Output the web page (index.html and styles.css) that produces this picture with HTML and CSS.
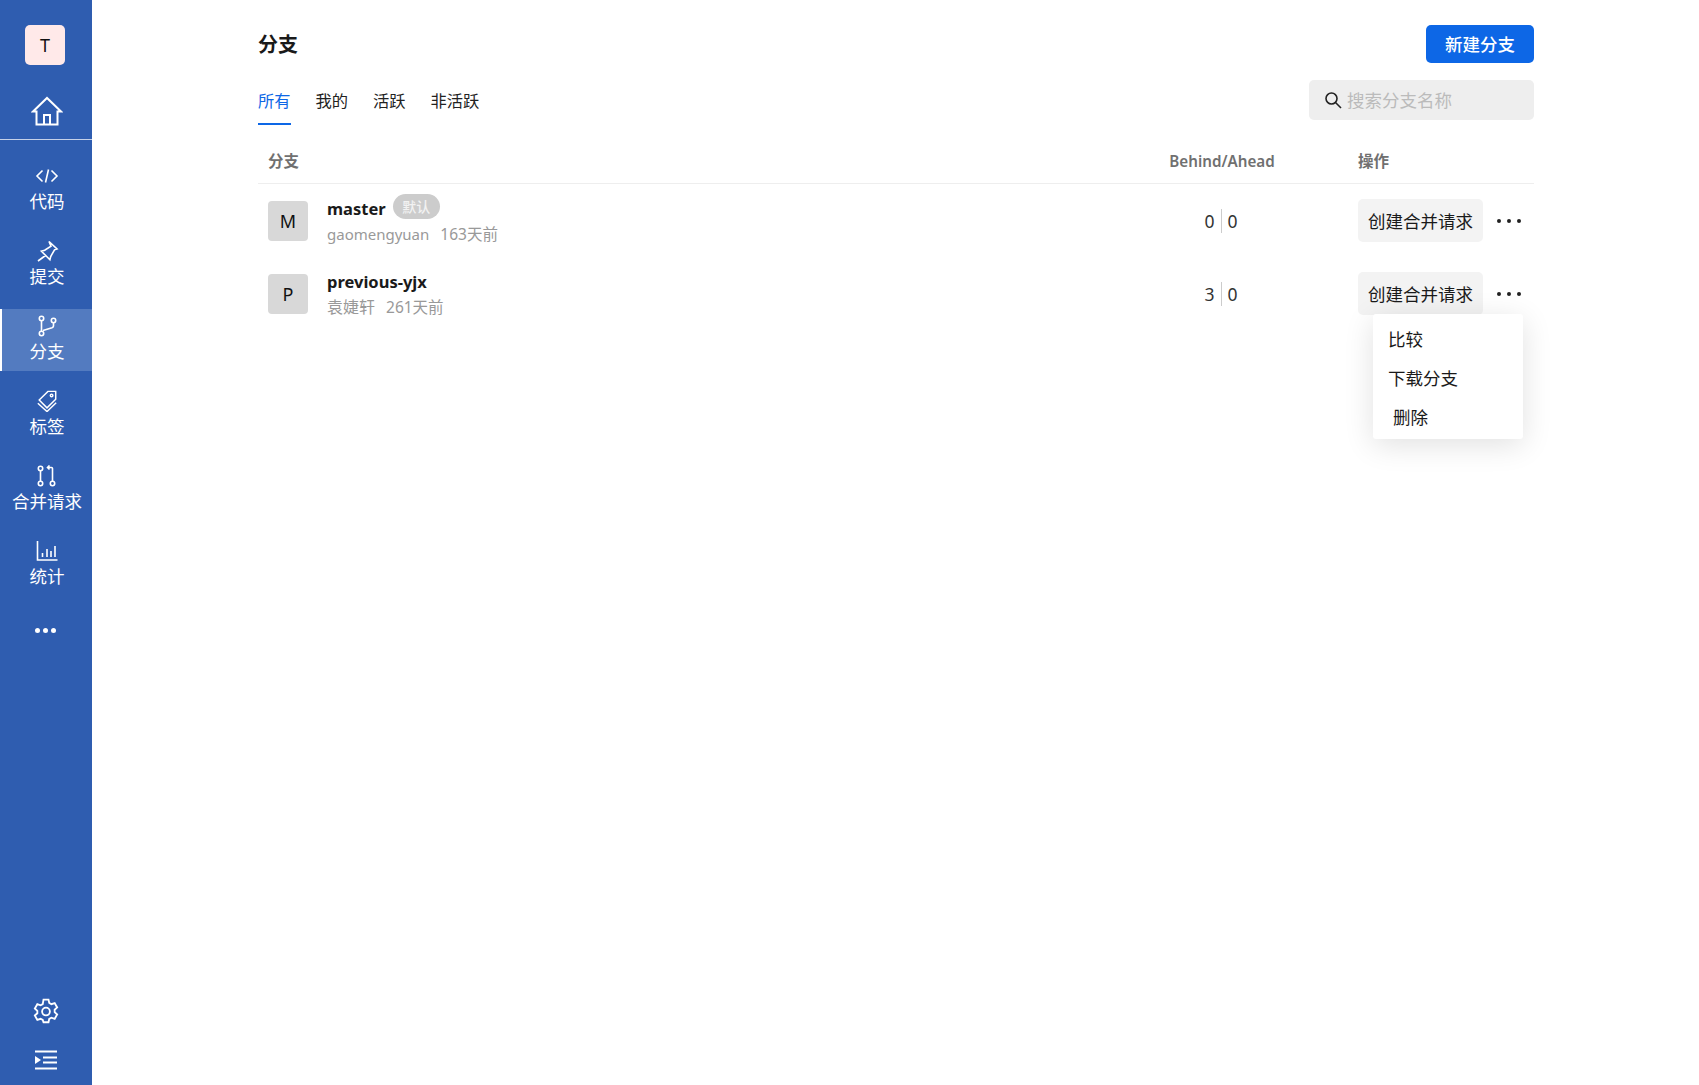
FILE: index.html
```html
<!DOCTYPE html>
<html>
<head>
    <title>分支</title>
    <link rel="stylesheet" href="styles.css">
</head>
<body>
    <div class="app">
        <div class="sidebar">
            <div class="avatar">T</div>
            <div class="home">
                <svg class="home-icon" viewBox="0 0 32 30"><path d="M2 15.500 16 2l14 13.500h-3.500V28.500H5.500V15.500Z M13 28.500V19h6v9.500"/></svg>
            </div>
            <div class="nav">
                <div class="nav-item">
                    <svg class="nav-icon" viewBox="0 0 24 20"><path d="M7.500 4.500 2 10l5.500 5.500M16.500 4.500 22 10l-5.500 5.500M13.500 3.500l-3 13"/></svg>
                    <span>代码</span>
                </div>
                <div class="nav-item">
                    <svg class="nav-icon" viewBox="0 0 24 22"><path d="M14 1.500 22 9l-2.500.8-3.800 6.700-.8 3.200-8.500-8.500 3.300-.9 6.300-4ZM10.500 15.500 3 21"/></svg>
                    <span>提交</span>
                </div>
                <div class="nav-item active">
                    <svg class="nav-icon" viewBox="0 0 24 22"><circle cx="6.500" cy="3.500" r="2.200"/><circle cx="6.500" cy="18.500" r="2.200"/><circle cx="18.500" cy="5.500" r="2.200"/><path d="M6.500 5.700v10.600M18.500 7.700v3.300c0 1-.6 1.500-1.500 1.800L8 15.500"/></svg>
                    <span>分支</span>
                </div>
                <div class="nav-item">
                    <svg class="nav-icon" viewBox="0 0 24 24"><path d="M13 1.500h8.500V10L12 19.500 3.500 11ZM2 14.500l10 9 10-9.500"/><circle cx="17" cy="6" r="1.400"/></svg>
                    <span>标签</span>
                </div>
                <div class="nav-item">
                    <svg class="nav-icon" viewBox="0 0 24 22"><circle cx="5.500" cy="3.500" r="2.200"/><circle cx="5.500" cy="18.500" r="2.200"/><circle cx="17.500" cy="18.500" r="2.200"/><path d="M5.500 5.700v10.600M17.500 16.300V3.500a1 1 0 0 0-1-1h-3M14.500.5l-2 2 2 2"/></svg>
                    <span>合并请求</span>
                </div>
                <div class="nav-item">
                    <svg class="nav-icon" viewBox="0 0 24 22"><path d="M2.500 1v19h20M7.500 13v4M12 9v8M16 11v6M20 6v11"/></svg>
                    <span>统计</span>
                </div>
            </div>
            <div class="nav-more"><i></i><i></i><i></i></div>
            <div class="side-bottom">
                <svg class="gear-icon" viewBox="0 0 24 24"><path d="M9.700 1.500h4.600l.7 3.100 2 1.100 3-1 2.300 4-2.300 2.100v2.300l2.300 2.100-2.300 4-3-1-2 1.100-.7 3.100H9.700L9 20.300l-2-1.100-3 1-2.300-4L4 14.100v-2.300L1.700 9.700l2.300-4 3 1 2-1.100Z"/><circle cx="12" cy="12.500" r="3.600"/></svg>
                <svg class="fold-icon" viewBox="0 0 24 20"><path class="line" d="M1 1.500h22M9 7.500h14M9 12.500h14M1 18.500h22"/><path class="solid" d="M1 6l6 4-6 4Z"/></svg>
            </div>
        </div>

        <div class="main">
            <div class="page-head">
                <h1>分支</h1>
                <div class="btn-new"><span>新建分支</span></div>
            </div>
            <div class="toolbar">
                <div class="tabs">
                    <div class="tab active">所有</div>
                    <div class="tab">我的</div>
                    <div class="tab">活跃</div>
                    <div class="tab">非活跃</div>
                </div>
                <div class="search">
                    <svg class="search-icon" viewBox="0 0 18 18"><circle cx="7.500" cy="7.500" r="5.500"/><path d="M11.500 11.500 17 17"/></svg>
                    <span>搜索分支名称</span>
                </div>
            </div>
            <div class="list-head">
                <div class="col-name">分支</div>
                <div class="col-diff">Behind/Ahead</div>
                <div class="col-op">操作</div>
            </div>

            <div class="row">
                <div class="col-name">
                    <div class="letter">M</div>
                    <div class="info">
                        <div class="title"><b>master</b><span class="badge">默认</span></div>
                        <div class="meta"><span class="author-en">gaomengyuan</span><span>163天前</span></div>
                    </div>
                </div>
                <div class="col-diff">
                    <span class="behind">0</span><span class="ahead">0</span>
                </div>
                <div class="col-op">
                    <div class="btn-merge">创建合并请求</div>
                    <div class="dots"><i></i><i></i><i></i></div>
                </div>
            </div>

            <div class="row">
                <div class="col-name">
                    <div class="letter">P</div>
                    <div class="info">
                        <div class="title"><b>previous-yjx</b></div>
                        <div class="meta"><span class="author-cn">袁婕轩</span><span>261天前</span></div>
                    </div>
                </div>
                <div class="col-diff">
                    <span class="behind">3</span><span class="ahead">0</span>
                </div>
                <div class="col-op">
                    <div class="btn-merge">创建合并请求</div>
                    <div class="dots"><i></i><i></i><i></i></div>
                    <div class="menu">
                        <div class="menu-item">比较</div>
                        <div class="menu-item">下载分支</div>
                        <div class="menu-item indent">删除</div>
                    </div>
                </div>
            </div>
        </div>
    </div>
</body>
</html>
```

FILE: styles.css
```css
* {
    box-sizing: border-box;
}

body {
    margin: 0;
    background-color: #fff;
    color: #1a1a1a;
    font-family: "Noto Sans", "Noto Sans CJK SC", sans-serif;
}

.app {
    display: flex;
    height: 100vh;
    overflow: hidden;
}

.sidebar {
    width: 92px;
    flex-shrink: 0;
    display: flex;
    flex-direction: column;
    align-items: center;
    background-color: #2f5db0;
    color: #fff;
    padding-top: 25px;
}

.avatar {
    width: 40px;
    height: 40px;
    margin-right: 2px;
    display: flex;
    justify-content: center;
    align-items: center;
    background-color: #ffe9e9;
    border-radius: 5px;
    color: #111;
    font-size: 18px;
}

.home {
    width: 100%;
    height: 75px;
    padding: 31px 0 0 2px;
    display: flex;
    justify-content: center;
    border-bottom: 1px solid #c5d1e8;
}

.home-icon {
    width: 32px;
    height: 30px;
    fill: none;
    stroke: #fff;
    stroke-width: 2;
}

.nav {
    width: 100%;
    margin-top: 19px;
    display: flex;
    flex-direction: column;
    gap: 13px;
}

.nav-item {
    height: 62px;
    padding-bottom: 3px;
    display: flex;
    flex-direction: column;
    align-items: center;
    justify-content: center;
    border-left: 2px solid transparent;
    font-size: 17.500px;
    line-height: 24px;
}

.nav-item.active {
    background-color: #537bc0;
    border-left-color: #fff;
}

.nav-icon {
    width: 24px;
    height: 22px;
    margin-bottom: 2px;
    fill: none;
    stroke: #fff;
    stroke-width: 1.600;
}

.nav-more {
    margin-top: 32px;
    display: flex;
    gap: 3px;
    padding-right: 2px;
}

.nav-more i {
    width: 5px;
    height: 5px;
    border-radius: 50%;
    background-color: #fff;
}

.side-bottom {
    margin-top: auto;
    padding-bottom: 15px;
    display: flex;
    flex-direction: column;
    align-items: center;
    gap: 26px;
}

.gear-icon {
    width: 26px;
    height: 26px;
    fill: none;
    stroke: #fff;
    stroke-width: 1.700;
}

.fold-icon {
    width: 24px;
    height: 20px;
}

.fold-icon .line {
    fill: none;
    stroke: #fff;
    stroke-width: 1.800;
}

.fold-icon .solid {
    fill: #fff;
}

.main {
    flex: 1;
    padding: 25px 165px 0 166px;
}

.page-head {
    display: flex;
    justify-content: space-between;
    align-items: center;
    height: 38px;
}

h1 {
    margin: -2px 0 0;
    font-size: 20px;
    font-weight: 700;
}

.btn-new {
    width: 108px;
    height: 38px;
    display: flex;
    justify-content: center;
    align-items: center;
    padding-bottom: 2px;
    background-color: #0d67e6;
    border-radius: 5px;
    color: #fff;
    font-size: 17.500px;
    font-weight: 500;
}

.toolbar {
    margin-top: 17px;
    display: flex;
    justify-content: space-between;
    align-items: flex-start;
}

.tabs {
    display: flex;
    gap: 25px;
}

.tab {
    height: 45px;
    padding-top: 9px;
    font-size: 16.250px;
    line-height: 24px;
    color: #222;
}

.tab.active {
    color: #0d67e6;
    border-bottom: 2px solid #0d67e6;
}

.search {
    width: 225px;
    height: 40px;
    display: flex;
    align-items: center;
    gap: 5px;
    padding-left: 15px;
    background-color: #eee;
    border-radius: 5px;
    color: #bbb;
    font-size: 17.500px;
}

.search span {
    margin-top: -2px;
}

.search-icon {
    width: 18px;
    height: 18px;
    fill: none;
    stroke: #222;
    stroke-width: 1.600;
}

.list-head {
    margin-top: 13px;
    height: 46px;
    display: flex;
    align-items: center;
    border-bottom: 1px solid #eee;
    font-size: 15.500px;
    font-weight: 700;
    color: #707070;
}

.list-head .col-name {
    padding-left: 10px;
}

.list-head .col-diff {
    font-size: 15.200px;
    font-weight: 600;
}

.list-head .col-op {
    margin-left: -1px;
}

.col-name {
    flex: 1;
    display: flex;
    align-items: center;
}

.col-diff {
    width: 204px;
    display: flex;
    justify-content: center;
    padding-right: 70px;
}

.col-op {
    width: 176px;
    display: flex;
    align-items: center;
    position: relative;
}

.row {
    height: 73px;
    display: flex;
    align-items: center;
}

.row .col-name {
    padding-left: 10px;
}

.letter {
    width: 40px;
    height: 40px;
    display: flex;
    justify-content: center;
    align-items: center;
    background-color: #d8d8d8;
    border-radius: 4px;
    color: #111;
    font-size: 18px;
}

.info {
    margin-left: 19px;
}

.title {
    display: flex;
    align-items: center;
    height: 26px;
    font-size: 16.500px;
}

.badge {
    margin-left: 7px;
    margin-top: -4px;
    width: 47px;
    height: 25px;
    display: flex;
    justify-content: center;
    align-items: center;
    background-color: #ccc;
    border-radius: 13px;
    color: #f2f2f2;
    font-size: 14px;
    font-weight: 500;
}

.meta {
    margin-top: 1px;
    display: flex;
    gap: 11px;
    font-size: 15.500px;
    line-height: 24px;
    color: #999;
}

.author-en {
    font-size: 15px;
}

.author-cn {
    font-size: 16px;
}

.behind,
.ahead {
    font-size: 17.500px;
    line-height: 24px;
    color: #333;
}

.behind {
    padding-right: 6px;
    border-right: 1px solid #ccc;
}

.ahead {
    padding-left: 6px;
}

.btn-merge {
    width: 125px;
    height: 43px;
    display: flex;
    justify-content: center;
    align-items: center;
    background-color: #f3f3f3;
    border-radius: 5px;
    font-size: 17.500px;
}

.dots {
    margin-left: 14px;
    display: flex;
    gap: 6px;
}

.dots i {
    width: 4px;
    height: 4px;
    border-radius: 50%;
    background-color: #222;
}

.menu {
    position: absolute;
    top: 42px;
    left: 15px;
    width: 150px;
    height: 125px;
    padding-top: 6px;
    display: flex;
    flex-direction: column;
    gap: 1px;
    background-color: #fff;
    border-radius: 3px;
    box-shadow: 0 6px 30px rgba(0, 0, 0, 0.12);
    z-index: 2;
    font-size: 17.500px;
}

.menu-item {
    height: 38px;
    padding-left: 15px;
    line-height: 38px;
}

.menu-item.indent {
    padding-left: 20px;
}
```
